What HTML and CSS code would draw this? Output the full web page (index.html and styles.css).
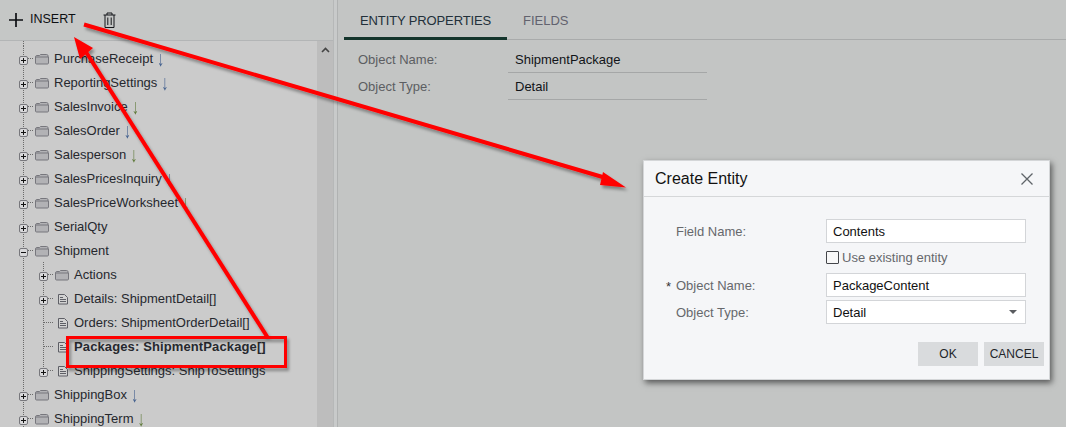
FILE: index.html
```html
<!DOCTYPE html>
<html lang="en">
<head>
<meta charset="utf-8">
<title>Create Entity</title>
<link rel="stylesheet" href="styles.css">
</head>
<body>
<svg class="defs" width="0" height="0" aria-hidden="true">
  <defs>
    <g id="plus"><rect x="0.5" y="0.5" width="8" height="8" rx="1.5" fill="#d8d8da" stroke="#77777c"/><path d="M2 4.5h5M4.5 2v5" stroke="#111" fill="none"/></g>
    <g id="minus"><rect x="0.5" y="0.5" width="8" height="8" rx="1.5" fill="#d8d8da" stroke="#77777c"/><path d="M2 4.5h5" stroke="#111" fill="none"/></g>
    <g id="folder"><path d="M0.5 3c0-1 .5-1.5 1.5-1.5h2.5L5.5.5h6c1 0 1.5.5 1.5 1.5v1M0.5 3h13v6c0 .6-.4 1-1 1h-11c-.6 0-1-.4-1-1z" fill="#b2b2b5" stroke="#77777d"/></g>
    <g id="doc"><path d="M0.5 0.5h6l3 3v6.5h-9z" fill="#d2d2d2" stroke="#5e5f66"/><path d="M2 3.5h3M2 5.5h6M2 7.5h6" stroke="#5e5f66" fill="none"/></g>
    <g id="l1"><path class="dot" d="M23.5 0v24M28 12.5h6"/></g>
    <g id="l2"><path class="dot" d="M23.5 0v24M43.5 0v24M48 12.5h6"/></g>
    <g id="l2leaf"><path class="dot" d="M23.5 0v24M43.5 0v24M44 12.5h10"/></g>
    <g id="l2last"><path class="dot" d="M23.5 0v24M43.5 0v13M48 12.5h6"/></g>
  </defs>
</svg>
<div class="app">
  <aside class="left">
    <div class="toolbar">
      <svg class="i-plus" width="14" height="14" viewBox="0 0 14 14"><path d="M0 7h14M7 0v14" stroke="#0d0f12" stroke-width="1.7" fill="none"/></svg>
      <span class="insert">INSERT</span>
      <svg class="i-trash" width="13" height="16" viewBox="0 0 13 16"><path d="M0.5 3h12M4 3V1h5v2M2 3v12.5h9V3M4.8 5.5v7.5M8.2 5.5v7.5" stroke="#15171a" fill="none"/></svg>
    </div>
    <div class="tree-wrap">
      <div class="tree">
        <svg class="tree-top"><path class="dot" d="M23.5 0v5"/></svg>
        <div class="row"><svg class="gut l1"><use href="#l1"/><use href="#plus" x="19" y="10"/><use href="#folder" x="35" y="8"/></svg><span>PurchaseReceipt</span><span class="ar blue">↓</span></div>
        <div class="row"><svg class="gut l1"><use href="#l1"/><use href="#plus" x="19" y="10"/><use href="#folder" x="35" y="8"/></svg><span>ReportingSettings</span><span class="ar blue">↓</span></div>
        <div class="row"><svg class="gut l1"><use href="#l1"/><use href="#plus" x="19" y="10"/><use href="#folder" x="35" y="8"/></svg><span>SalesInvoice</span><span class="ar green">↓</span></div>
        <div class="row"><svg class="gut l1"><use href="#l1"/><use href="#plus" x="19" y="10"/><use href="#folder" x="35" y="8"/></svg><span>SalesOrder</span><span class="ar blue">↓</span></div>
        <div class="row"><svg class="gut l1"><use href="#l1"/><use href="#plus" x="19" y="10"/><use href="#folder" x="35" y="8"/></svg><span>Salesperson</span><span class="ar green">↓</span></div>
        <div class="row"><svg class="gut l1"><use href="#l1"/><use href="#plus" x="19" y="10"/><use href="#folder" x="35" y="8"/></svg><span>SalesPricesInquiry</span><span class="ar blue">↓</span></div>
        <div class="row"><svg class="gut l1"><use href="#l1"/><use href="#plus" x="19" y="10"/><use href="#folder" x="35" y="8"/></svg><span>SalesPriceWorksheet</span><span class="ar green">↓</span></div>
        <div class="row"><svg class="gut l1"><use href="#l1"/><use href="#plus" x="19" y="10"/><use href="#folder" x="35" y="8"/></svg><span>SerialQty</span></div>
        <div class="row"><svg class="gut l1"><use href="#l1"/><use href="#minus" x="19" y="10"/><use href="#folder" x="35" y="8"/></svg><span>Shipment</span></div>
        <div class="row"><svg class="gut l2"><use href="#l2"/><use href="#plus" x="39" y="10"/><use href="#folder" x="55" y="8"/></svg><span>Actions</span></div>
        <div class="row"><svg class="gut l2"><use href="#l2"/><use href="#plus" x="39" y="10"/><use href="#doc" x="58" y="8"/></svg><span>Details: ShipmentDetail[]</span></div>
        <div class="row"><svg class="gut l2"><use href="#l2leaf"/><use href="#doc" x="58" y="8"/></svg><span>Orders: ShipmentOrderDetail[]</span></div>
        <div class="row sel"><svg class="gut l2"><use href="#l2leaf"/><use href="#doc" x="58" y="8"/></svg><span>Packages: ShipmentPackage[]</span></div>
        <div class="row"><svg class="gut l2"><use href="#l2last"/><use href="#plus" x="39" y="10"/><use href="#doc" x="58" y="8"/></svg><span>ShippingSettings: ShipToSettings</span></div>
        <div class="row"><svg class="gut l1"><use href="#l1"/><use href="#plus" x="19" y="10"/><use href="#folder" x="35" y="8"/></svg><span>ShippingBox</span><span class="ar blue">↓</span></div>
        <div class="row"><svg class="gut l1"><use href="#l1"/><use href="#plus" x="19" y="10"/><use href="#folder" x="35" y="8"/></svg><span>ShippingTerm</span><span class="ar green">↓</span></div>
      </div>
      <div class="scrollbar">
        <svg class="chev" width="9" height="6" viewBox="0 0 9 6"><path d="M1 5l3.5-3.5L8 5" stroke="#444" stroke-width="1.6" fill="none"/></svg>
      </div>
    </div>
  </aside>
  <div class="splitter"></div>
  <main class="right">
    <div class="tabs">
      <div class="tab active">ENTITY PROPERTIES</div>
      <div class="tab">FIELDS</div>
    </div>
    <div class="props">
      <div class="prop"><div class="prop-label">Object Name:</div><div class="prop-value">ShipmentPackage</div></div>
      <div class="prop"><div class="prop-label">Object Type:</div><div class="prop-value">Detail</div></div>
    </div>
  </main>
</div>

<section class="dialog">
  <header class="dlg-head">
    <h2 class="dlg-title">Create Entity</h2>
    <svg class="dlg-close" width="12" height="12" viewBox="0 0 12 12"><path d="M0.5 0.5l11 11M11.5 0.5l-11 11" stroke="#5f6469" stroke-width="1.3" fill="none"/></svg>
  </header>
  <div class="dlg-body">
    <div class="dlg-row"><label class="dlg-label">Field Name:</label><div class="input">Contents</div></div>
    <div class="dlg-row check-row"><span class="dlg-label"></span><div class="check"><span class="box"></span><span class="check-text">Use existing entity</span></div></div>
    <div class="dlg-row"><label class="dlg-label req">Object Name:</label><div class="input">PackageContent</div></div>
    <div class="dlg-row"><label class="dlg-label">Object Type:</label><div class="input select">Detail<span class="caret"></span></div></div>
  </div>
  <div class="dlg-actions">
    <button class="btn ok" type="button">OK</button>
    <button class="btn" type="button">CANCEL</button>
  </div>
</section>

<svg class="annot" width="1066" height="427" viewBox="0 0 1066 427" aria-hidden="true">
  <defs>
    <filter id="sh" x="-10%" y="-10%" width="120%" height="120%"><feDropShadow dx="2" dy="3" stdDeviation="1.5" flood-color="#000" flood-opacity=".35"/></filter>
  </defs>
  <g filter="url(#sh)">
    <path d="M84 24.5L606 178" stroke="#f00" stroke-width="4" fill="none"/>
    <path d="M626 187.5L603 172L600 185z" fill="#f00"/>
    <path d="M268 338L86 52" stroke="#f00" stroke-width="4" fill="none"/>
    <path d="M74 37L93 48L80 59z" fill="#f00"/>
    <rect x="67.5" y="337.5" width="218" height="29" fill="none" stroke="#f00" stroke-width="3"/>
  </g>
</svg>
</body>
</html>
```
FILE: styles.css
```css
* { box-sizing: border-box; }
html, body { margin: 0; padding: 0; height: 100%; overflow: hidden; }
body { font-family: "Liberation Sans", Arial, sans-serif; font-size: 13px; color: #15181c; background: #c4c6c5; }
.defs { display: block; height: 0; }
.app { display: flex; height: 427px; }
.left { width: 333px; display: flex; flex-direction: column; flex: none; }
.toolbar { height: 41px; display: flex; align-items: center; padding-left: 9px; background: #c5c7c6; border-bottom: 1px solid #b3b5b6; flex: none; }
.i-plus { flex: none; }
.insert { margin-left: 7px; font-size: 12.5px; margin-top: -3px; color: #0d0f12; }
.i-trash { margin-left: 27px; flex: none; }
.tree-wrap { flex: 1; display: flex; min-height: 0; background: #cbcbcb; }
.tree { flex: 1; overflow: hidden; }
.tree-top { display: block; width: 40px; height: 5px; }
.row { display: flex; align-items: center; height: 24px; white-space: nowrap; color: #26282e; font-size: 13px; }
.gut { height: 24px; flex: none; }
.gut.l1 { width: 54px; }
.gut.l2 { width: 74px; }
.dot { stroke: #6a6a6a; stroke-dasharray: 1 1; fill: none; }
.ar { display: inline-block; margin-left: 4px; font-size: 14px; transform: scaleY(1.5); }
.blue { color: #44618f; }
.green { color: #5f7a3a; }
.sel { font-weight: bold; letter-spacing: .12px; }
.scrollbar { width: 16px; flex: none; background: #bdbdbd; display: flex; justify-content: center; align-items: flex-start; padding-top: 6px; }
.chev { display: block; }
.splitter { width: 5px; flex: none; background: #c8caca; border-left: 1px solid #b6b8b8; border-right: 1px solid #b0b2b2; }
.right { flex: 1; background: #c3c5c4; padding-left: 6px; }
.tabs { display: flex; height: 40px; border-bottom: 1px solid #a9abab; }
.tab { padding: 13px 16px 0; height: 40px; font-size: 13px; color: #62626e; white-space: nowrap; }
.tab.active { width: 163px; color: #22303a; border-bottom: 3px solid #14352c; letter-spacing: -.12px; }
.props { padding-left: 14px; padding-top: 6px; }
.prop { display: flex; height: 27px; align-items: center; }
.prop-label { width: 150px; color: #5c5e62; font-size: 13px; }
.prop-value { width: 199px; height: 27px; padding: 6px 0 0 7px; color: #111418; border-bottom: 1px solid #a5a7a7; }

.dialog { position: absolute; left: 643px; top: 160px; width: 407px; height: 220px; background: #f5f6f8; border: 1px solid #d4d6d8; box-shadow: 2px 3px 6px rgba(0,0,0,.55); }
.dlg-head { height: 36px; display: flex; align-items: center; justify-content: space-between; padding: 0 16px 0 11px; border-bottom: 1px solid #d5d7d9; }
.dlg-title { margin: 0; font-size: 16px; font-weight: normal; color: #111; }
.dlg-body { padding: 22px 0 0 32px; }
.dlg-row { display: flex; align-items: center; margin-bottom: 3px; }
.dlg-label { width: 150px; color: #66686c; font-size: 13px; position: relative; flex: none; }
.req::before { content: "*"; position: absolute; left: -10px; top: 1px; color: #333; font-size: 13px; }
.input { width: 200px; height: 24px; background: #fff; border: 1px solid #d3d5d8; padding: 4px 6px 0; color: #111; position: relative; font-size: 13px; }
.check-row { height: 27px; margin-bottom: 0; align-items: flex-start; padding-top: 5px; }
.check { display: flex; align-items: flex-start; }
.box { width: 13px; height: 13px; background: #f8f8f8; border: 1px solid #44464a; border-radius: 1px; }
.check-text { margin-left: 3px; color: #66686c; margin-top: -1px; }
.caret { position: absolute; right: 8px; top: 9px; border: 4px solid transparent; border-top-color: #5a5c60; border-bottom: 0; }
.dlg-actions { display: flex; justify-content: flex-end; gap: 6px; padding: 15px 5px 0 0; }
.btn { width: 60px; height: 24px; border: 0; background: #d9dbdd; color: #22252a; font: 12px "Liberation Sans", Arial, sans-serif; padding: 0; }
.annot { position: absolute; left: 0; top: 0; pointer-events: none; }
```
